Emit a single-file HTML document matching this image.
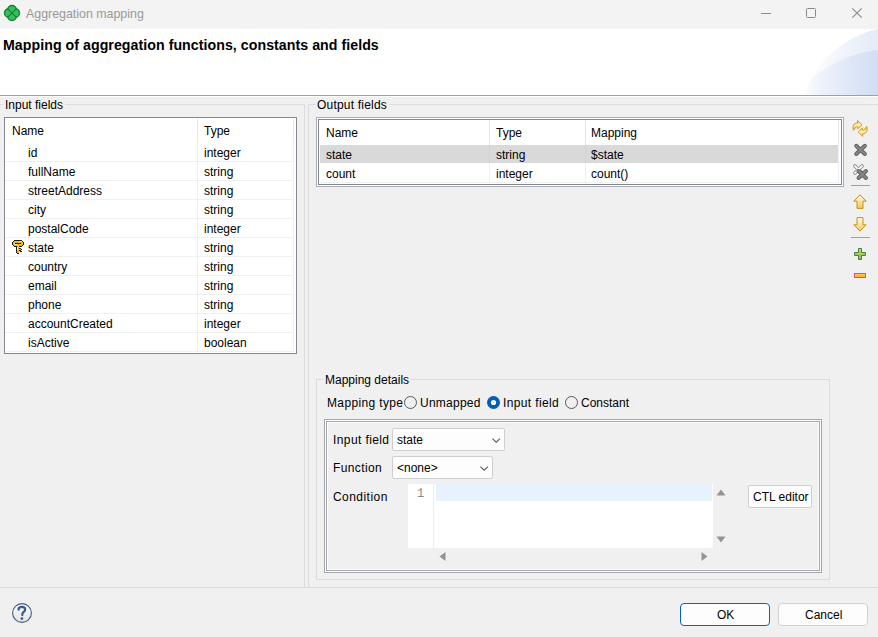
<!DOCTYPE html>
<html><head><meta charset="utf-8">
<style>
*{margin:0;padding:0;box-sizing:border-box}
html,body{width:878px;height:637px;overflow:hidden;background:#f0f0f0;font-family:"Liberation Sans",sans-serif;font-size:12px;color:#000}
.a{position:absolute}
.t{position:absolute;white-space:nowrap;line-height:14px}
svg{position:absolute;overflow:visible}
</style></head><body>
<div class="a" style="left:0px;top:0px;width:878px;height:29px;background:#f3f3f3"></div>
<svg style="left:3px;top:4px" width="18" height="18" viewBox="0 0 18 18">
<g stroke="#0a8a2a" stroke-width="1.4" fill="#0a8a2a"><circle cx="9" cy="5.8" r="4.3"/><circle cx="12.2" cy="9" r="4.3"/><circle cx="9" cy="12.2" r="4.3"/><circle cx="5.8" cy="9" r="4.3"/></g>
<g fill="#3dba62"><circle cx="9" cy="5.8" r="3.6"/><circle cx="12.2" cy="9" r="3.6"/><circle cx="9" cy="12.2" r="3.6"/><circle cx="5.8" cy="9" r="3.6"/></g>
<path d="M4.6 4.6 L13.4 13.4 M13.4 4.6 L4.6 13.4" stroke="#0a8a2a" stroke-width="1.2"/>
</svg>
<div class="t" style="left:26px;top:7px;color:#999;font-size:12.4px">Aggregation mapping</div>
<div class="a" style="left:761px;top:13px;width:10px;height:1px;background:#8a8a8a"></div>
<div class="a" style="left:806px;top:8px;width:10px;height:10px;border:1px solid #8a8a8a;border-radius:1.5px"></div>
<svg style="left:852px;top:8px" width="10" height="10" viewBox="0 0 10 10"><path d="M0.3 0.3 L9.7 9.7 M9.7 0.3 L0.3 9.7" stroke="#8a8a8a" stroke-width="1.1"/></svg>
<div class="a" style="left:0px;top:29px;width:878px;height:66px;background:#fff"></div>
<div class="t" style="left:3px;top:38px;font-weight:bold;font-size:14.2px;letter-spacing:0.04px">Mapping of aggregation functions, constants and fields</div>
<svg style="left:780px;top:29px" width="98" height="66" viewBox="0 0 98 66">
<defs><linearGradient id="g1" x1="0" x2="1" y1="0" y2="0"><stop offset="0" stop-color="#fff"/><stop offset="1" stop-color="#e4eaf8"/></linearGradient>
<linearGradient id="g2" x1="0" x2="1" y1="0" y2="0"><stop offset="0" stop-color="#fff" stop-opacity="0"/><stop offset="0.35" stop-color="#eef2fb"/><stop offset="1" stop-color="#d2ddf3"/></linearGradient></defs>
<clipPath id="cp"><path d="M24.5 66 C31 40 60 8 98 0 L98 66Z"/></clipPath>
<path d="M24.5 66 C31 40 60 8 98 0 L98 66Z" fill="url(#g1)"/>
<path d="M10 66 C30 50 58 25 98 21 L98 66Z" fill="url(#g2)" clip-path="url(#cp)"/>
</svg>
<div class="a" style="left:0px;top:95px;width:878px;height:1px;background:#a0a0a0"></div>
<div class="a" style="left:0px;top:96px;width:878px;height:1px;background:#fff"></div>
<div class="a" style="left:0px;top:104px;width:305px;height:484px;border:1px solid #dcdcdc;border-left:none"></div>
<div class="t" style="left:3px;top:98px;background:#f0f0f0;padding:0 2px">Input fields</div>
<div class="a" style="left:308px;top:104px;width:580px;height:484px;border:1px solid #dcdcdc;border-right:none"></div>
<div class="t" style="left:315px;top:98px;background:#f0f0f0;padding:0 2px;letter-spacing:0.2px">Output fields</div>
<div class="a" style="left:4px;top:117px;width:293px;height:237px;border:1px solid #828790;background:#fff"></div>
<div class="t" style="left:12px;top:124px;">Name</div>
<div class="t" style="left:204px;top:124px;">Type</div>
<div class="a" style="left:197px;top:119px;width:1px;height:24px;background:#e5e5e5"></div>
<div class="a" style="left:293px;top:119px;width:1px;height:24px;background:#e5e5e5"></div>
<div class="t" style="left:28px;top:146px;">id</div>
<div class="t" style="left:204px;top:146px;">integer</div>
<div class="a" style="left:5px;top:161px;width:288px;height:1px;background:#f0f0f0"></div>
<div class="t" style="left:28px;top:165px;">fullName</div>
<div class="t" style="left:204px;top:165px;">string</div>
<div class="a" style="left:5px;top:180px;width:288px;height:1px;background:#f0f0f0"></div>
<div class="t" style="left:28px;top:184px;">streetAddress</div>
<div class="t" style="left:204px;top:184px;">string</div>
<div class="a" style="left:5px;top:199px;width:288px;height:1px;background:#f0f0f0"></div>
<div class="t" style="left:28px;top:203px;">city</div>
<div class="t" style="left:204px;top:203px;">string</div>
<div class="a" style="left:5px;top:218px;width:288px;height:1px;background:#f0f0f0"></div>
<div class="t" style="left:28px;top:222px;">postalCode</div>
<div class="t" style="left:204px;top:222px;">integer</div>
<div class="a" style="left:5px;top:237px;width:288px;height:1px;background:#f0f0f0"></div>
<div class="t" style="left:28px;top:241px;">state</div>
<div class="t" style="left:204px;top:241px;">string</div>
<div class="a" style="left:5px;top:256px;width:288px;height:1px;background:#f0f0f0"></div>
<div class="t" style="left:28px;top:260px;">country</div>
<div class="t" style="left:204px;top:260px;">string</div>
<div class="a" style="left:5px;top:275px;width:288px;height:1px;background:#f0f0f0"></div>
<div class="t" style="left:28px;top:279px;">email</div>
<div class="t" style="left:204px;top:279px;">string</div>
<div class="a" style="left:5px;top:294px;width:288px;height:1px;background:#f0f0f0"></div>
<div class="t" style="left:28px;top:298px;">phone</div>
<div class="t" style="left:204px;top:298px;">string</div>
<div class="a" style="left:5px;top:313px;width:288px;height:1px;background:#f0f0f0"></div>
<div class="t" style="left:28px;top:317px;">accountCreated</div>
<div class="t" style="left:204px;top:317px;">integer</div>
<div class="a" style="left:5px;top:332px;width:288px;height:1px;background:#f0f0f0"></div>
<div class="t" style="left:28px;top:336px;">isActive</div>
<div class="t" style="left:204px;top:336px;">boolean</div>
<div class="a" style="left:5px;top:351px;width:288px;height:1px;background:#f0f0f0"></div>
<div class="a" style="left:197px;top:143px;width:1px;height:209px;background:#eaf1fb"></div>
<div class="a" style="left:293px;top:143px;width:1px;height:209px;background:#eaf1fb"></div>
<svg style="left:12px;top:240px" width="12" height="14" viewBox="0 0 12 14" shape-rendering="crispEdges">
<g fill="#1e1e2c"><rect x="2" y="0" width="8" height="1"/><rect x="1" y="1" width="10" height="1"/><rect x="0" y="2" width="12" height="3"/><rect x="1" y="5" width="10" height="1"/><rect x="2" y="6" width="8" height="1"/>
<rect x="4" y="7" width="3" height="6"/><rect x="7" y="8" width="2" height="4"/><rect x="9" y="9" width="1" height="1"/><rect x="9" y="11" width="1" height="1"/><rect x="5" y="13" width="2" height="1"/></g>
<g fill="#f0b42a"><rect x="2" y="1" width="8" height="1"/><rect x="1" y="2" width="10" height="3"/><rect x="2" y="5" width="8" height="1"/><rect x="5" y="6" width="2" height="7"/><rect x="7" y="9" width="2" height="1"/><rect x="7" y="11" width="1" height="1"/></g>
<g fill="#ffe37a"><rect x="7" y="1" width="3" height="1"/><rect x="2" y="4" width="4" height="1"/><rect x="5" y="7" width="1" height="3"/></g>
<rect x="3" y="3" width="6" height="1" fill="#1e1e2c"/>
</svg>
<div class="a" style="left:316px;top:117px;width:528px;height:70px;border:1px solid #aaadb3"></div>
<div class="a" style="left:317px;top:118px;width:526px;height:68px;border:1px solid #fff"></div>
<div class="a" style="left:318px;top:119px;width:524px;height:66px;border:1px solid #828790;background:#fff"></div>
<div class="t" style="left:326px;top:126px;">Name</div>
<div class="t" style="left:496px;top:126px;">Type</div>
<div class="t" style="left:591px;top:126px;">Mapping</div>
<div class="a" style="left:320px;top:145px;width:519px;height:18px;background:#d9d9d9"></div>
<div class="a" style="left:489px;top:120px;width:1px;height:25px;background:#e5e5e5"></div>
<div class="a" style="left:585px;top:120px;width:1px;height:25px;background:#e5e5e5"></div>
<div class="a" style="left:838px;top:120px;width:1px;height:25px;background:#e5e5e5"></div>
<div class="a" style="left:489px;top:145px;width:1px;height:38px;background:#eaf1fb"></div>
<div class="a" style="left:585px;top:145px;width:1px;height:38px;background:#eaf1fb"></div>
<div class="a" style="left:838px;top:145px;width:1px;height:38px;background:#eaf1fb"></div>
<div class="a" style="left:489px;top:145px;width:1px;height:18px;background:#cdd5df"></div>
<div class="a" style="left:585px;top:145px;width:1px;height:18px;background:#cdd5df"></div>
<div class="a" style="left:320px;top:182px;width:518px;height:1px;background:#f0f0f0"></div>
<div class="t" style="left:326px;top:148px;">state</div>
<div class="t" style="left:496px;top:148px;">string</div>
<div class="t" style="left:591px;top:148px;">$state</div>
<div class="t" style="left:326px;top:167px;">count</div>
<div class="t" style="left:496px;top:167px;">integer</div>
<div class="t" style="left:591px;top:167px;">count()</div>
<svg style="left:852px;top:119px" width="16" height="18" viewBox="0 0 16 18">
<defs><linearGradient id="gy" x1="0" y1="0" x2="0" y2="1"><stop offset="0" stop-color="#f5c430"/><stop offset="0.45" stop-color="#fff2b8"/><stop offset="1" stop-color="#e6b020"/></linearGradient></defs>
<path id="arr" d="M1.3 11.3 L1 7.6 Q1.4 4.4 4.6 4.1 L5.5 4.1 L5.5 1.4 L10 5.9 L5.8 9.9 L5.8 7.8 L4.5 7.8 Q3.1 8 2.9 9.8 Z" fill="url(#gy)" stroke="#cf9a1c" stroke-width="0.9" stroke-linejoin="round"/>
<use href="#arr" transform="rotate(180 8.1 9.4)"/>
</svg>
<svg style="left:850px;top:140px" width="22" height="45" viewBox="0 0 22 45"><path d="M6.2 5.8 L14.9 14.0 M14.9 5.8 L6.2 14.0" stroke="#5e5e5e" stroke-width="4.0" stroke-linecap="round"/><path d="M6.2 5.8 L14.9 14.0 M14.9 5.8 L6.2 14.0" stroke="#858585" stroke-width="2.2" stroke-linecap="round"/><path d="M5.0 26.0 L12.0 33.0 M12.0 26.0 L5.0 33.0" stroke="#8c8c84" stroke-width="3.6" stroke-linecap="round"/><path d="M5.0 26.0 L12.0 33.0 M12.0 26.0 L5.0 33.0" stroke="#f4f4f4" stroke-width="1.8" stroke-linecap="round"/><path d="M8.5 31.0 L16.0 38.0 M16.0 31.0 L8.5 38.0" stroke="#5e5e5e" stroke-width="4.0" stroke-linecap="round"/><path d="M8.5 31.0 L16.0 38.0 M16.0 31.0 L8.5 38.0" stroke="#858585" stroke-width="2.2" stroke-linecap="round"/></svg>
<div class="a" style="left:851px;top:185px;width:19px;height:1px;background:#a0a0a0"></div>
<svg style="left:853px;top:194px" width="14" height="15" viewBox="0 0 14 15">
<defs><linearGradient id="gu" x1="0" y1="0" x2="0" y2="1"><stop offset="0" stop-color="#fffbe6"/><stop offset="1" stop-color="#f2c658"/></linearGradient></defs>
<path d="M7 0.8 L13.2 7.2 L10 7.2 L10 14.4 L4 14.4 L4 7.2 L0.8 7.2Z" fill="url(#gu)" stroke="#c8901e" stroke-width="1" stroke-linejoin="round"/></svg>
<svg style="left:853px;top:217px" width="14" height="15" viewBox="0 0 14 15">
<defs><linearGradient id="gd" x1="0" y1="0" x2="0" y2="1"><stop offset="0" stop-color="#fffbe6"/><stop offset="1" stop-color="#f2c658"/></linearGradient></defs>
<path d="M7 14.2 L13.2 7.8 L10 7.8 L10 0.6 L4 0.6 L4 7.8 L0.8 7.8Z" fill="url(#gd)" stroke="#c8901e" stroke-width="1" stroke-linejoin="round"/></svg>
<div class="a" style="left:851px;top:237px;width:19px;height:1px;background:#a0a0a0"></div>
<svg style="left:854px;top:248px" width="12" height="12" viewBox="0 0 12 12">
<defs><linearGradient id="gp" x1="0" y1="0" x2="0" y2="1"><stop offset="0" stop-color="#d8dc50"/><stop offset="1" stop-color="#8cb848"/></linearGradient></defs><path d="M4.5 0.5 H7.5 V4.5 H11.5 V7.5 H7.5 V11.5 H4.5 V7.5 H0.5 V4.5 H4.5Z" fill="url(#gp)" stroke="#3a8446" stroke-width="1"/></svg>
<svg style="left:854px;top:273px" width="12" height="5" viewBox="0 0 12 5">
<defs><linearGradient id="gm" x1="0" y1="0" x2="0" y2="1"><stop offset="0" stop-color="#ffd24a"/><stop offset="1" stop-color="#f8a838"/></linearGradient></defs>
<rect x="0.5" y="0.5" width="11" height="4" fill="url(#gm)" stroke="#f04a6a" stroke-width="1"/></svg>
<div class="a" style="left:316px;top:379px;width:514px;height:201px;border:1px solid #dcdcdc"></div>
<div class="t" style="left:323px;top:373px;background:#f0f0f0;padding:0 2px">Mapping details</div>
<div class="t" style="left:327px;top:396px;letter-spacing:0.36px">Mapping type</div>
<svg style="left:404px;top:396px" width="13" height="13" viewBox="0 0 13 13"><circle cx="6.5" cy="6.5" r="6" fill="none" stroke="#5a5a5a" stroke-width="1"/></svg>
<div class="t" style="left:420px;top:396px;letter-spacing:0.25px">Unmapped</div>
<svg style="left:487px;top:396px" width="13" height="13" viewBox="0 0 13 13"><circle cx="6.5" cy="6.5" r="6.5" fill="#005fb8"/><circle cx="6.5" cy="6.5" r="2.6" fill="#fff"/></svg>
<div class="t" style="left:503px;top:396px;letter-spacing:0.36px">Input field</div>
<svg style="left:565px;top:396px" width="13" height="13" viewBox="0 0 13 13"><circle cx="6.5" cy="6.5" r="6" fill="none" stroke="#5a5a5a" stroke-width="1"/></svg>
<div class="t" style="left:581px;top:396px;">Constant</div>
<div class="a" style="left:324px;top:419px;width:498px;height:154px;border:1px solid #a2a5ac"></div>
<div class="a" style="left:325px;top:420px;width:496px;height:152px;border:1px solid #fff"></div>
<div class="a" style="left:326px;top:421px;width:494px;height:150px;border:1px solid #a2a5ac"></div>
<div class="a" style="left:327px;top:422px;width:492px;height:148px;border:1px solid #fff"></div>
<div class="t" style="left:333px;top:433px;letter-spacing:0.4px">Input field</div>
<div class="a" style="left:392px;top:428px;width:113px;height:23px;border:1px solid #cfcfcf;border-radius:2px;background:#fdfdfd"></div>
<div class="t" style="left:397px;top:433px;">state</div>
<svg style="left:492px;top:437.5px" width="9" height="5" viewBox="0 0 9 5"><path d="M0.4 0.6 L4.2 4.2 L8 0.6" fill="none" stroke="#5a5a5a" stroke-width="1.05"/></svg>
<div class="t" style="left:333px;top:461px;letter-spacing:0.38px">Function</div>
<div class="a" style="left:392px;top:456px;width:101px;height:23px;border:1px solid #cfcfcf;border-radius:2px;background:#fdfdfd"></div>
<div class="t" style="left:397px;top:461px;">&lt;none&gt;</div>
<svg style="left:480px;top:465.5px" width="9" height="5" viewBox="0 0 9 5"><path d="M0.4 0.6 L4.2 4.2 L8 0.6" fill="none" stroke="#5a5a5a" stroke-width="1.05"/></svg>
<div class="t" style="left:333px;top:490px;letter-spacing:0.45px">Condition</div>
<div class="a" style="left:408px;top:484px;width:305px;height:64px;background:#fff;border-bottom-right-radius:2px"></div>
<div class="a" style="left:433px;top:484px;width:1px;height:64px;background:#ececec"></div>
<div class="a" style="left:436px;top:484px;width:276px;height:17px;background:#e8f2fe"></div>
<div class="t" style="left:417px;top:487px;font-family:'Liberation Mono',monospace;color:#888;font-size:12px">1</div>
<svg style="left:716px;top:489px" width="10" height="7" viewBox="0 0 10 7"><path d="M5 0.5 L9.5 6.5 H0.5Z" fill="#939393"/></svg>
<svg style="left:716px;top:536px" width="10" height="7" viewBox="0 0 10 7"><path d="M5 6.5 L9.5 0.5 H0.5Z" fill="#939393"/></svg>
<svg style="left:439px;top:552px" width="7" height="9" viewBox="0 0 7 9"><path d="M0.5 4.5 L6.5 0 V9Z" fill="#939393"/></svg>
<svg style="left:701px;top:552px" width="7" height="9" viewBox="0 0 7 9"><path d="M6.5 4.5 L0.5 0 V9Z" fill="#939393"/></svg>
<div class="a" style="left:748px;top:485px;width:64px;height:23px;border:1px solid #cfcfcf;border-radius:2px;background:#fdfdfd"></div>
<div class="t" style="left:753px;top:490px;">CTL editor</div>
<div class="a" style="left:0px;top:587px;width:878px;height:1px;background:#dadada"></div>
<svg style="left:12px;top:603px" width="20" height="20" viewBox="0 0 20 20">
<defs><linearGradient id="gh" x1="0" y1="0" x2="0" y2="1"><stop offset="0" stop-color="#fbfbfb"/><stop offset="1" stop-color="#e4e4e4"/></linearGradient></defs>
<circle cx="10" cy="10" r="9.4" fill="url(#gh)" stroke="#3f5d86" stroke-width="1.1"/>
<path d="M6.5 6.7 C6.5 4.7 8 3.9 9.9 3.9 C12 3.9 13.2 5 13.2 6.6 C13.2 8.3 11.6 9 10.9 9.8 C10.4 10.4 10.3 11 10.3 12.1" fill="none" stroke="#3f5a85" stroke-width="2.2" stroke-linecap="round"/>
<circle cx="9.9" cy="15.6" r="1.35" fill="#3f5a85"/>
</svg>
<div class="a" style="left:680px;top:603px;width:90px;height:23px;border:1.5px solid #0067c0;border-radius:4px;background:#fdfdfd"></div>
<div class="t" style="left:717px;top:608px;">OK</div>
<div class="a" style="left:778px;top:603px;width:90px;height:23px;border:1px solid #d0d0d0;border-radius:4px;background:#fdfdfd"></div>
<div class="t" style="left:805px;top:608px;">Cancel</div>
</body></html>
